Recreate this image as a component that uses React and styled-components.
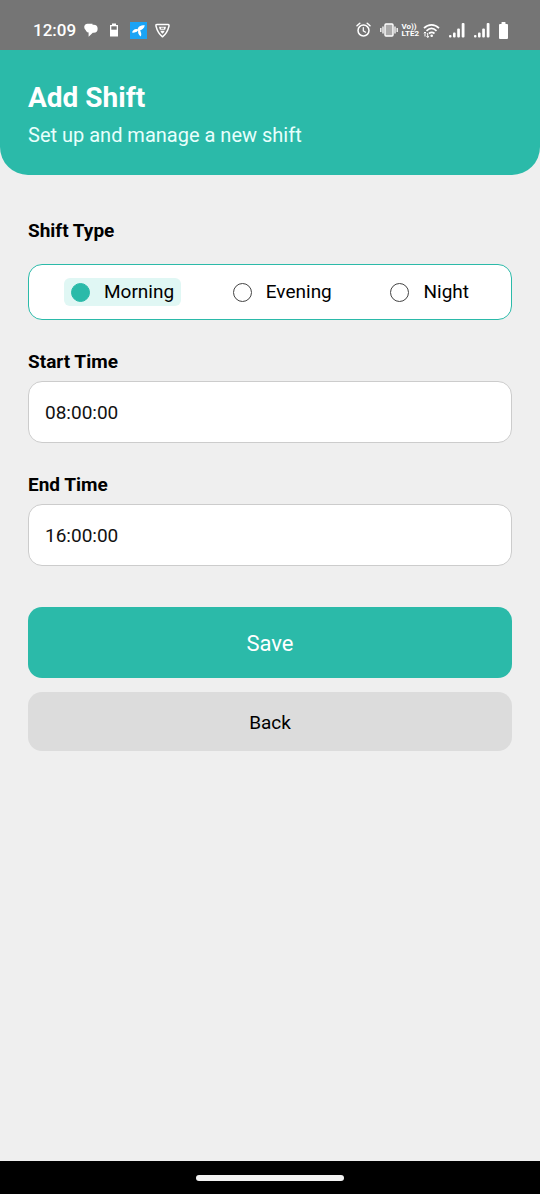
import React, { useState } from "react";
import styled, { createGlobalStyle } from "styled-components";

const GlobalStyle = createGlobalStyle`
  * {
    box-sizing: border-box;
  }

  body {
    margin: 0;
    background-color: #efefef;
    font-family: Roboto, "Liberation Sans", sans-serif;
    color: #000;
  }

  h1,
  p {
    margin: 0;
  }
`;

const Screen = styled.div`
  min-height: 100vh;
  display: flex;
  flex-direction: column;
`;

const StatusBar = styled.div`
  display: flex;
  align-items: center;
  justify-content: space-between;
  padding: 20px 32px 10px 33px;
  background-color: #757575;
  color: white;

  svg {
    display: block;
    flex: none;
  }
`;

const StatusGroup = styled.div`
  display: flex;
  align-items: center;
  height: 20px;
  gap: ${(props) => props.$gap}px;
`;

const Clock = styled.span`
  font-size: 17px;
  font-weight: 500;
  line-height: 20px;
`;

const NetworkLabel = styled.span`
  display: flex;
  flex-direction: column;
  font-size: 8px;
  font-weight: 700;
  line-height: 7px;
`;

const Header = styled.header`
  padding: 31px 28px 28px;
  background-color: #2bbaa9;
  color: white;
  border-radius: 0 0 28px 28px;

  h1 {
    font-size: 28px;
    font-weight: 700;
    line-height: 34px;
    margin-bottom: 8px;
  }

  p {
    font-size: 20px;
    line-height: 24px;
    color: #e8fffc;
  }
`;

const Form = styled.form`
  flex: 1;
  display: flex;
  flex-direction: column;
  padding: 44px 28px;
`;

const ShiftGroup = styled.fieldset`
  border: 0;
  margin: 0 0 30px;
  padding: 0;
  min-width: 0;
`;

const GroupTitle = styled.legend`
  padding: 0;
  margin-bottom: 21px;
  font-size: 19px;
  font-weight: 700;
  line-height: 24px;
`;

const OptionBox = styled.div`
  display: flex;
  align-items: center;
  justify-content: space-between;
  height: 56px;
  padding: 0 35px;
  background-color: white;
  border: 1px solid #2bbaa9;
  border-radius: 14px;
`;

const Option = styled.label`
  display: flex;
  align-items: center;
  gap: 14px;
  padding: 1px 7px;
  font-size: 19px;
  line-height: 26px;
  border-radius: 6px;
  background-color: ${(props) => (props.$selected ? "#e0f7f4" : "transparent")};
`;

const Radio = styled.input`
  appearance: none;
  flex: none;
  width: 19px;
  height: 19px;
  margin: 0;
  border: 1px solid #444;
  border-radius: 50%;

  &:checked {
    border-color: #2bbaa9;
    background-color: #2bbaa9;
  }
`;

const Field = styled.div`
  display: flex;
  flex-direction: column;
  gap: 7px;
  margin-bottom: 30px;

  label {
    font-size: 19px;
    font-weight: 700;
    line-height: 24px;
  }

  input {
    width: 100%;
    height: 62px;
    padding: 0 16px;
    border: 1px solid #ccc;
    border-radius: 14px;
    background-color: white;
    color: #111;
    font-family: inherit;
    font-size: 19px;
  }
`;

const Actions = styled.div`
  display: flex;
  flex-direction: column;
  gap: 14px;
  margin-top: 11px;
`;

const Button = styled.button`
  border: 0;
  border-radius: 14px;
  font-family: inherit;
  line-height: 27px;
`;

const SaveButton = styled(Button)`
  padding: 23px 22px 21px;
  font-size: 22px;
  color: white;
  background-color: #2bbaa9;
`;

const BackButton = styled(Button)`
  padding: 17px 16px 15px;
  font-size: 19px;
  color: black;
  background-color: #dcdcdc;
`;

const NavigationBar = styled.footer`
  display: flex;
  align-items: center;
  justify-content: center;
  height: 33px;
  background-color: black;
`;

const HomeHandle = styled.div`
  width: 148px;
  height: 6px;
  border-radius: 3px;
  background-color: #f2f2f2;
`;

const ChatIcon = () => (
  <svg width="14" height="16" viewBox="0 0 14 16" fill="white">
    <path d="M4 1.800h4.500v6.400H4v2.300L2.300 8.200A3.200 3.200 0 0 1 .2 5.100 3.300 3.300 0 0 1 4 1.800z" />
    <path d="M6.500 2.800h3.200a3.900 3.900 0 0 1 0 7.900H8.800L4.600 14.800v-4.300A3.900 3.900 0 0 1 6.500 2.800z" />
  </svg>
);

const LowBatteryIcon = () => (
  <svg width="8" height="14" viewBox="0 0 8 14">
    <path d="M2 .5h4v1.500h2v11.500H0V2h2z" fill="white" />
    <path d="M1.300 3.300h5.400v3.400H1.300z" fill="#757575" />
  </svg>
);

const CarrierIcon = () => (
  <svg width="17" height="17" viewBox="0 0 17 17">
    <rect width="17" height="17" fill="#1ba3f5" />
    <g fill="white">
      <path d="M7.600 8.200C7.500 5.300 9.800 3.300 14.800 3.300c-.4 2.600-2.600 5-6 5.600z" />
      <path d="M7.800 7.300C5.500 6.200 3 7.300 2 10.600c2.500.3 4.900-.5 6.300-2.300z" />
      <path d="M8.200 8.300c-.5 2.300.3 4.700 2.700 6.200.8-2.200.3-4.600-1.200-6.500z" />
    </g>
  </svg>
);

const ShieldIcon = () => (
  <svg width="15" height="15" viewBox="0 0 15 15" fill="none" stroke="white" strokeLinejoin="round">
    <path d="M2 1.500h11q1.300.2 1 1.600C13 7.500 11 11 7.500 13.800 4 11 2 7.500 1 3.100.8 1.700 1 1.500 2 1.500z" strokeWidth="1.500" />
    <path d="M4 3.700h7l-.8 3H4.800z" fill="white" stroke="none" />
    <path d="M5.300 7.700h4.400C9.200 9 8.500 9.900 7.500 10.800 6.500 9.900 5.800 9 5.300 7.700z" fill="white" stroke="none" />
    <path d="M6 5.200h3" stroke="#757575" strokeWidth="1" />
  </svg>
);

const AlarmIcon = () => (
  <svg width="15" height="16" viewBox="0 0 15 16" fill="none" stroke="white" strokeLinecap="round">
    <circle cx="7.500" cy="8.500" r="5.500" strokeWidth="1.500" />
    <path d="M7.300 5.500v3.300l2.300 1.400" strokeWidth="1.200" />
    <path d="M1 3.800l2.800-2.500M14 3.800l-2.800-2.500" strokeWidth="1.500" />
  </svg>
);

const VibrateIcon = () => (
  <svg width="18" height="14" viewBox="0 0 18 14" fill="none" stroke="white">
    <rect x="5" y="1" width="8" height="12" rx="1" fill="#aaa" strokeWidth="1.400" />
    <path d="M3 3.500v7M15 3.500v7M.8 5v4M17.200 5v4" strokeWidth="1.300" />
  </svg>
);

const WifiIcon = () => (
  <svg width="17" height="15" viewBox="0 0 17 15" fill="none" stroke="white">
    <path d="M1 5.200C5.300.8 11.700.8 16 5.200M3.500 7.800c3.200-3 6.800-3 10 0M6 10.500c1.800-1.500 3.700-1.500 5.500 0" strokeWidth="1.700" />
    <circle cx="8.700" cy="12.700" r="1.300" fill="white" stroke="none" />
    <path d="M2 9v4.500M4.700 10v4.500M.8 10.200L2 9l1.200 1.200M3.500 13.200l1.200 1.200L6 13.200" strokeWidth="1" />
  </svg>
);

const SignalIcon = () => (
  <svg width="16" height="15" viewBox="0 0 16 15" fill="white">
    <rect x="0" y="12" width="2.500" height="2.500" rx="1" />
    <rect x="4" y="9.500" width="2.600" height="5" rx="1" />
    <rect x="8.200" y="5.500" width="2.700" height="9" rx="1" />
    <rect x="12.700" y="0" width="2.800" height="14.500" rx="1" />
  </svg>
);

const BatteryIcon = () => (
  <svg width="9" height="17" viewBox="0 0 9 17" fill="white">
    <path d="M3 0h3q.5 0 .5.500V2H8q1 0 1 1v13q0 1-1 1H1q-1 0-1-1V3q0-1 1-1h1.500V.5Q2.500 0 3 0z" />
  </svg>
);

const shifts = ["Morning", "Evening", "Night"];

const App = () => {
  const [shift, setShift] = useState("Morning");
  const [startTime, setStartTime] = useState("08:00:00");
  const [endTime, setEndTime] = useState("16:00:00");

  return (
    <>
      <GlobalStyle />
      <Screen>
        <StatusBar>
          <StatusGroup $gap={8}>
            <Clock>12:09</Clock>
            <StatusGroup $gap={12}>
              <ChatIcon />
              <LowBatteryIcon />
              <CarrierIcon />
            </StatusGroup>
            <ShieldIcon />
          </StatusGroup>
          <StatusGroup $gap={9}>
            <AlarmIcon />
            <StatusGroup $gap={4}>
              <VibrateIcon />
              <NetworkLabel>
                <span>Vo))</span>
                <span>LTE2</span>
              </NetworkLabel>
              <WifiIcon />
            </StatusGroup>
            <SignalIcon />
            <SignalIcon />
            <BatteryIcon />
          </StatusGroup>
        </StatusBar>
        <Header>
          <h1>Add Shift</h1>
          <p>Set up and manage a new shift</p>
        </Header>
        <Form onSubmit={(e) => e.preventDefault()}>
          <ShiftGroup>
            <GroupTitle>Shift Type</GroupTitle>
            <OptionBox>
              {shifts.map((name) => (
                <Option key={name} $selected={shift === name}>
                  <Radio
                    type="radio"
                    name="shift"
                    value={name}
                    checked={shift === name}
                    onChange={() => setShift(name)}
                  />
                  {name}
                </Option>
              ))}
            </OptionBox>
          </ShiftGroup>
          <Field>
            <label htmlFor="start">Start Time</label>
            <input
              id="start"
              type="text"
              value={startTime}
              onChange={(e) => setStartTime(e.target.value)}
            />
          </Field>
          <Field>
            <label htmlFor="end">End Time</label>
            <input
              id="end"
              type="text"
              value={endTime}
              onChange={(e) => setEndTime(e.target.value)}
            />
          </Field>
          <Actions>
            <SaveButton type="submit">Save</SaveButton>
            <BackButton type="button">Back</BackButton>
          </Actions>
        </Form>
        <NavigationBar>
          <HomeHandle />
        </NavigationBar>
      </Screen>
    </>
  );
};

export default App;
